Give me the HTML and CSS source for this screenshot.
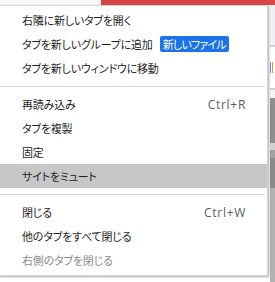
FILE: index.html
```html
<!DOCTYPE html>
<html lang="ja">
<head>
  <meta charset="UTF-8" />
  <meta name="viewport" content="width=device-width, initial-scale=1.0"/>
  <title>Tab context menu</title>
  <link rel="stylesheet" href="styles.css">
</head>
<body>
  <!-- background window behind the menu -->
  <div class="backdrop">
    <div class="tabstrip">
      <div class="tab-light"></div>
      <div class="tab-red"></div>
    </div>
    <div class="content">
      <div class="page"></div>
      <div class="side">
        <div class="side-toolbar"></div>
        <div class="side-line"></div>
        <div class="side-text"><span class="glyph"></span></div>
        <div class="side-line"></div>
        <div class="side-gap"></div>
        <div class="side-dark"></div>
        <div class="side-light"></div>
        <div class="side-mid"></div>
        <div class="side-dark2"></div>
        <div class="side-rest"></div>
      </div>
    </div>
  </div>

  <!-- Context menu -->
  <div class="menu">
    <div class="item">右隣に新しいタブを開く</div>
    <div class="item">
      <span class="label">タブを新しいグループに追加<span class="badge">新しいファイル</span></span>
    </div>
    <div class="item">タブを新しいウィンドウに移動</div>
    <div class="sep"></div>
    <div class="item"><span>再読み込み</span><span class="key">Ctrl+R</span></div>
    <div class="item">タブを複製</div>
    <div class="item">固定</div>
    <div class="item hover">サイトをミュート</div>
    <div class="sep"></div>
    <div class="item"><span>閉じる</span><span class="key">Ctrl+W</span></div>
    <div class="item">他のタブをすべて閉じる</div>
    <div class="item disabled">右側のタブを閉じる</div>
  </div>
</body>
</html>
```

FILE: styles.css
```css
* {
  box-sizing: border-box;
  margin: 0;
  padding: 0;
}

body {
  width: 275px;
  height: 282px;
  overflow: hidden;
  position: relative;
  background-color: #b2b2b2;
  font-family: "Noto Sans CJK JP", sans-serif;
}

.backdrop {
  width: 275px;
  height: 282px;
  display: flex;
  flex-direction: column;
}

.tabstrip {
  height: 5px;
  display: flex;
}

.tab-light {
  width: 101px;
  background-color: #f7f7f7;
}

.tab-red {
  flex: 1;
  background-color: #db4444;
}

.content {
  flex: 1;
  display: flex;
}

.page {
  flex: 1;
  background-color: #ffffff;
}

.side {
  width: 5px;
  display: flex;
  flex-direction: column;
  overflow: hidden;
}

.side-toolbar {
  height: 40px;
  background-color: #f0f0f4;
}

.side-line {
  height: 2px;
  background-color: #d0d0d4;
}

.side-text {
  height: 41px;
  background-color: #fff;
  display: flex;
  align-items: center;
}

.side-text .glyph {
  width: 3px;
  height: 11px;
  border-left: 1px solid #6a8cc8;
  border-right: 1px solid #d8924a;
}

.side-gap {
  height: 8px;
  background-color: #f4f4f4;
}

.side-dark {
  height: 45px;
  background-color: #8e8e8e;
}

.side-light {
  height: 7px;
  background-color: #d2d2d2;
}

.side-mid {
  height: 8px;
  background-color: #a2a2a2;
}

.side-dark2 {
  height: 30px;
  background-color: #8a8a8a;
}

.side-rest {
  flex: 1;
  background-color: #b2b2b2;
}

/* popup menu */
.menu {
  position: absolute;
  left: -2px;
  top: 5px;
  width: 270px;
  background-color: #fff;
  border: 1px solid #d4d4d4;
  box-shadow: 1px 1px 2px rgba(0, 0, 0, 0.35);
  padding: 2px 0 3px;
}

.item {
  height: 24px;
  display: flex;
  align-items: center;
  justify-content: space-between;
  padding: 0 21px 0 23px;
  font-size: 11px;
  letter-spacing: -0.2px;
  font-feature-settings: "palt";
  color: #1e1e1e;
  white-space: nowrap;
}

.item.hover {
  background-color: #c7c7c7;
}

.item.disabled {
  color: #8a8a8a;
}

.label {
  display: flex;
  align-items: center;
}

.badge {
  margin-left: 7px;
  background-color: #1a73e8;
  color: #fff;
  border-radius: 2px;
  padding: 0 3px 0 3px;
  height: 16px;
  line-height: 16px;
  font-size: 11px;
  letter-spacing: -0.8px;
}

.key {
  font-family: "Open Sans", sans-serif;
  font-size: 12px;
  letter-spacing: 0.7px;
  color: #555a66;
}

.sep {
  height: 1px;
  background-color: #dadada;
  margin: 6px 2px 5px 0;
}
```
